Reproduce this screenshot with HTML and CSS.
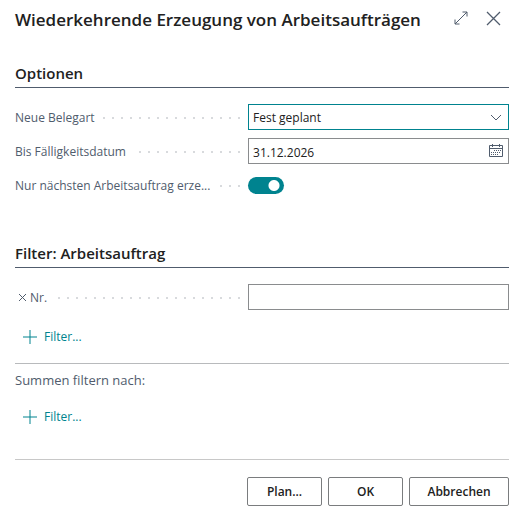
FILE: index.html
```html
<!DOCTYPE html>
<html lang="de">
<head>
    <meta charset="UTF-8">
    <meta name="viewport" content="width=device-width, initial-scale=1">
    <title>Wiederkehrende Erzeugung von Arbeitsaufträgen</title>
    <link rel="stylesheet" href="styles.css">
</head>
<body>
    <form class="dialog">
        <header class="dialog-header">
            <h1>Wiederkehrende Erzeugung von Arbeitsaufträgen</h1>
            <button type="button" class="icon-button" aria-label="Maximieren">
                <svg width="14" height="14" viewBox="0 0 14 14"><path d="M1 13L13 1M8.500 1H13V5.500M1 8.500V13H5.500"/></svg>
            </button>
            <button type="button" class="icon-button" aria-label="Schließen">
                <svg class="close" width="15" height="15" viewBox="0 0 15 15"><path d="M1 1L14 14M14 1L1 14"/></svg>
            </button>
        </header>

        <section class="options">
            <h2>Optionen</h2>
            <div class="field">
                <label for="belegart"><span>Neue Belegart</span></label>
                <div class="control">
                    <select id="belegart" class="active">
                        <option>Fest geplant</option>
                    </select>
                    <svg class="control-icon" width="14" height="14" viewBox="0 0 14 14"><path d="M2 5L7 10L12 5"/></svg>
                </div>
            </div>
            <div class="field">
                <label for="datum"><span>Bis Fälligkeitsdatum</span></label>
                <div class="control">
                    <input type="text" id="datum" value="31.12.2026">
                    <svg class="control-icon calendar" width="14" height="14" viewBox="0 0 14 14"><path d="M.5 1.500H13.500V12.500H.5ZM.5 4.500H13.500M3.500 0V3M10.500 0V3"/><path class="days" d="M5 6.500H12M2 8.500H12M2 10.500H10"/></svg>
                </div>
            </div>
            <div class="field">
                <label for="naechster"><span>Nur nächsten Arbeitsauftrag erze...</span></label>
                <div class="control">
                    <input type="checkbox" id="naechster" class="toggle" checked>
                </div>
            </div>
        </section>

        <section class="filters">
            <h2>Filter: Arbeitsauftrag</h2>
            <div class="field">
                <div class="filter-name">
                    <button type="button" class="icon-button" aria-label="Filter entfernen">
                        <svg width="9" height="9" viewBox="0 0 9 9"><path d="M1 1L8 8M8 1L1 8"/></svg>
                    </button>
                    <label for="nr"><span>Nr.</span></label>
                </div>
                <div class="control">
                    <input type="text" id="nr">
                </div>
            </div>
            <button type="button" class="add-filter">
                <svg width="14" height="14" viewBox="0 0 14 14"><path d="M7 0V14M0 7H14"/></svg>
                Filter...
            </button>
        </section>

        <section class="totals">
            <h3>Summen filtern nach:</h3>
            <button type="button" class="add-filter">
                <svg width="14" height="14" viewBox="0 0 14 14"><path d="M7 0V14M0 7H14"/></svg>
                Filter...
            </button>
        </section>

        <footer class="dialog-footer">
            <button type="button">Plan...</button>
            <button type="submit">OK</button>
            <button type="button" class="wide">Abbrechen</button>
        </footer>
    </form>
</body>
</html>
```
FILE: styles.css
```css
* { box-sizing: border-box; }
body { margin: 0; background-color: #fff; color: #212121; font-family: "Segoe UI", "Open Sans", "Noto Sans", sans-serif; font-size: 12px; line-height: 16px; }
h1, h2, h3 { margin: 0; }
button, input, select { font: inherit; color: inherit; }
button { padding: 0; border: none; background: none; cursor: pointer; }
svg { display: block; fill: none; stroke: #505c6d; }

.dialog { padding: 8px 12px 14px 15px; }
.dialog-header { display: flex; align-items: center; height: 24px; padding-right: 8px; gap: 18px; }
.dialog-header h1 { flex: 1; font-size: 17px; font-weight: 600; line-height: 24px; white-space: nowrap; }
.dialog-header svg { margin-bottom: 4px; }
.close { stroke-width: 1.3; }

h2 { height: 24px; margin-bottom: 16px; border-bottom: 1px solid #505c6d; font-size: 15px; font-weight: 600; line-height: 18px; }
.options { padding-top: 32px; }
.filters { padding-top: 38px; }

/* label on the left with dots up to the control */
.field { display: grid; grid-template-columns: minmax(0, 25fr) minmax(0, 28fr); align-items: center; height: 26px; margin-bottom: 8px; }
.field label { display: flex; align-items: center; flex: 1; min-width: 0; padding: 2px 8px 0 0; color: #505c6d; }
.field label span { max-width: 200px; overflow: hidden; white-space: nowrap; text-overflow: ellipsis; }
.field label::after { content: ""; flex: 1; height: 2px; margin-left: 6px; background: repeating-linear-gradient(to left, #d8dadd 0 2px, transparent 2px 9px); }
.filter-name { display: flex; align-items: center; gap: 3px; padding-left: 3px; }

.control { position: relative; display: flex; align-items: center; }
.control input[type="text"], .control select { width: 100%; height: 26px; padding: 2px 24px 0 4px; border: 1px solid #8a8c8e; border-radius: 0; outline: none; background: #fff; appearance: none; }
.control select.active { border-color: #00838f; }
.control-icon { position: absolute; right: 6px; pointer-events: none; }
.calendar .days { stroke-dasharray: 1 1; }
.toggle { width: 36px; height: 17px; margin: 0; border-radius: 9px; background: radial-gradient(circle at 26px 50%, #fff 5px, #00838f 6px); appearance: none; }

.add-filter { display: flex; align-items: center; gap: 7px; height: 20px; margin-left: 8px; color: #00838f; }
.add-filter svg { stroke: #00838f; }
.filters .add-filter { margin: 17px 0 16px 8px; }
.totals { padding: 7px 0 32px; border-top: 1px solid #b8babc; border-bottom: 1px solid #c8c8c8; }
.totals h3 { margin-bottom: 18px; color: #505c6d; font-size: 13px; font-weight: 400; line-height: 18px; }

.dialog-footer { display: flex; justify-content: flex-end; gap: 6px; padding-top: 17px; }
.dialog-footer button { width: 75px; height: 29px; border: 1px solid #7a7c7e; border-radius: 2px; font-weight: 600; }
.dialog-footer .wide { width: 100px; }
```
